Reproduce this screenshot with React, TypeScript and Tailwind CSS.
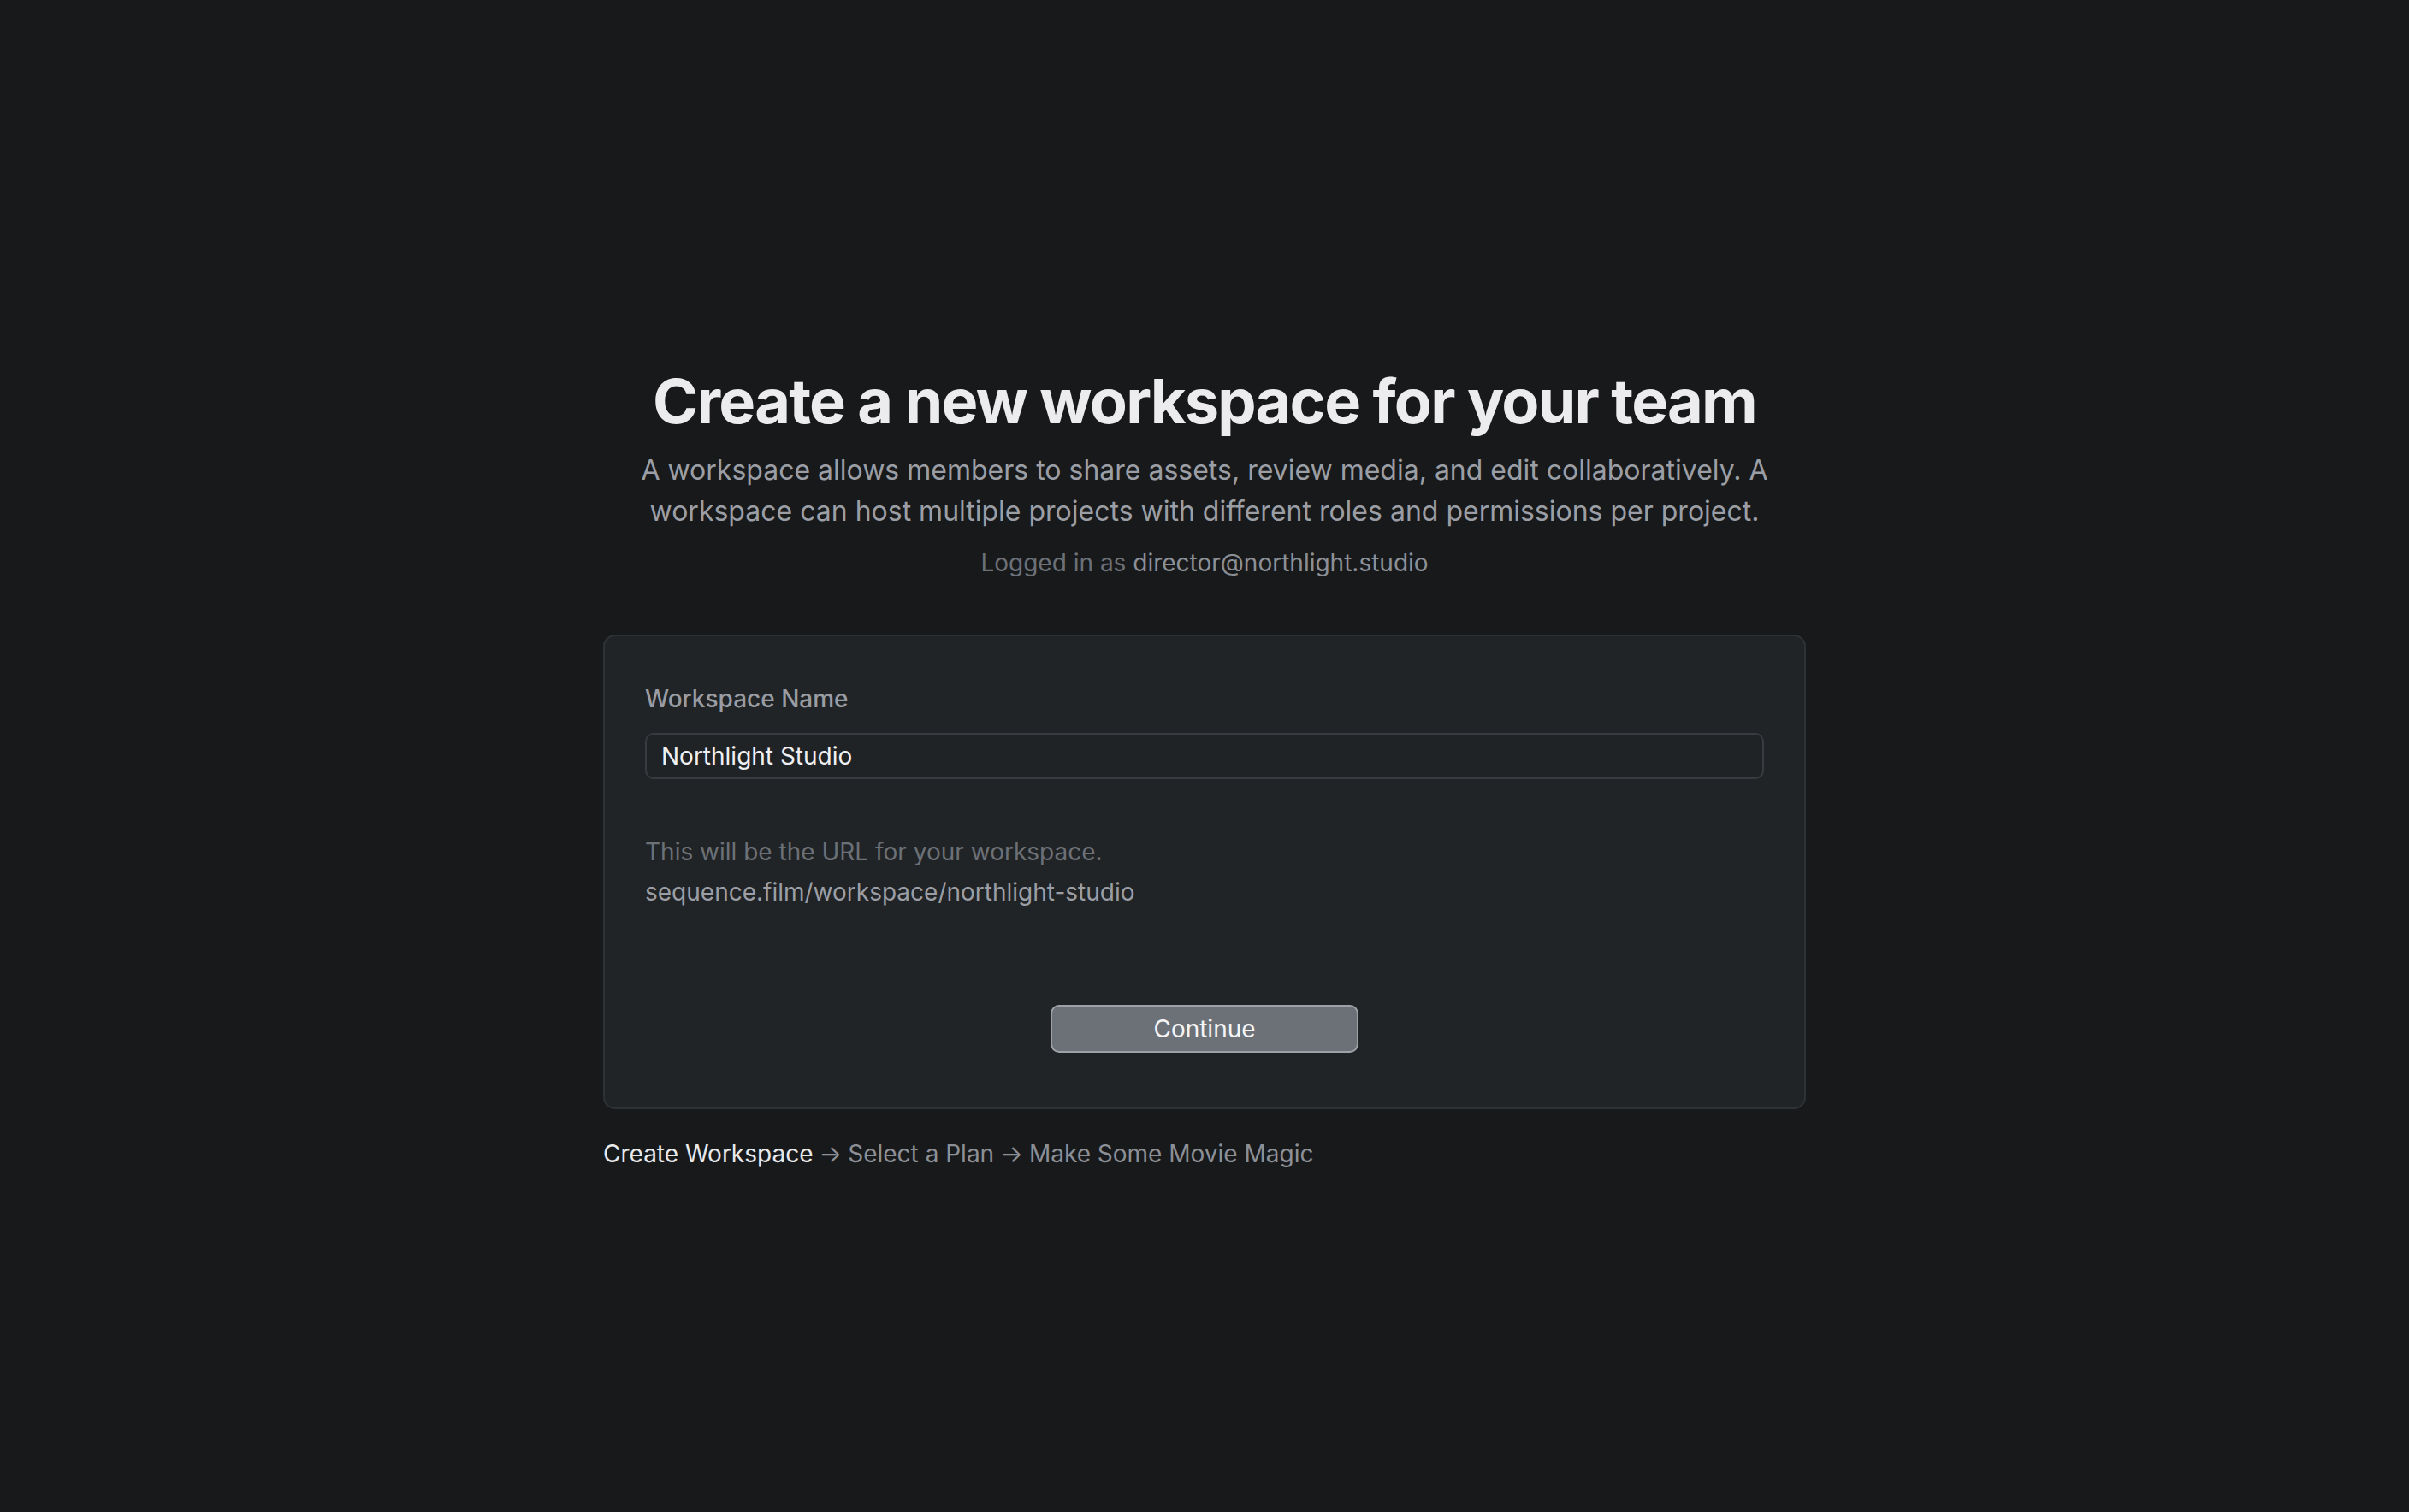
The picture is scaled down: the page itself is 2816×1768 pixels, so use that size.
import { useState } from 'react';

const STEPS = ['Create Workspace', 'Select a Plan', 'Make Some Movie Magic'];

function slugify(value: string) {
  return value
    .trim()
    .toLowerCase()
    .replace(/[^a-z0-9]+/g, '-')
    .replace(/^-+|-+$/g, '');
}

export default function App() {
  const [name, setName] = useState('Northlight Studio');

  return (
    <div
      className="min-h-screen w-full bg-[#18191b] flex items-center justify-center"
      style={{ fontFamily: 'Inter, "Noto Sans", sans-serif' }}
    >
      <main className="w-[1406px] flex flex-col pt-[30px]">
        {/* heading */}
        <header className="flex flex-col items-center text-center">
          <h1 className="text-[72px] leading-[80px] font-bold tracking-[-0.025em] text-[#ececee]">
            Create a new workspace for your team
          </h1>
          <p className="mt-[17px] text-[32px] leading-[48px] text-[#9b9fa5]">
            A workspace allows members to share assets, review media, and edit collaboratively. A workspace can host
            multiple projects with different roles and permissions per project.
          </p>
          <p className="mt-[16px] text-[28px] leading-[40px] text-[#6c7077]">
            Logged in as <span className="text-[#8c9096]">director@northlight.studio</span>
          </p>
        </header>

        {/* form card */}
        <section className="mt-[64px] rounded-[14px] border-2 border-[#2e3235] bg-[#212426] px-[47px] pt-[53px] pb-[64px]">
          <label className="block text-[28px] leading-[40px] font-medium text-[#999da3]">Workspace Name</label>
          <input
            type="text"
            value={name}
            onChange={(e) => setName(e.target.value)}
            className="mt-[20px] block w-full h-[54px] rounded-[10px] border-2 border-[#383c40] bg-[#202325] px-[17px] text-[28px] text-[#f0f0f2] outline-none"
          />

          <p className="mt-[62px] text-[28px] leading-[47px] text-[#6c7077]">This will be the URL for your workspace.</p>
          <p className="text-[28px] leading-[47px] text-[#9b9fa5]">sequence.film/workspace/{slugify(name)}</p>

          <div className="mt-[108px] flex justify-center">
            <button className="h-[56px] w-[360px] rounded-[10px] border-2 border-[#9ea2a8] bg-[#6c7178] text-[28px] text-[#f5f5f6]">
              Continue
            </button>
          </div>
        </section>

        {/* onboarding steps */}
        <nav className="mt-[32px] text-[28px] leading-[40px] text-[#8c9096]">
          {STEPS.map((step, i) => (
            <span key={step}>
              {i > 0 && <span className="mx-[7px]">→</span>}
              <span className={i === 0 ? 'text-[#e8e9eb]' : ''}>{step}</span>
            </span>
          ))}
        </nav>
      </main>
    </div>
  );
}
